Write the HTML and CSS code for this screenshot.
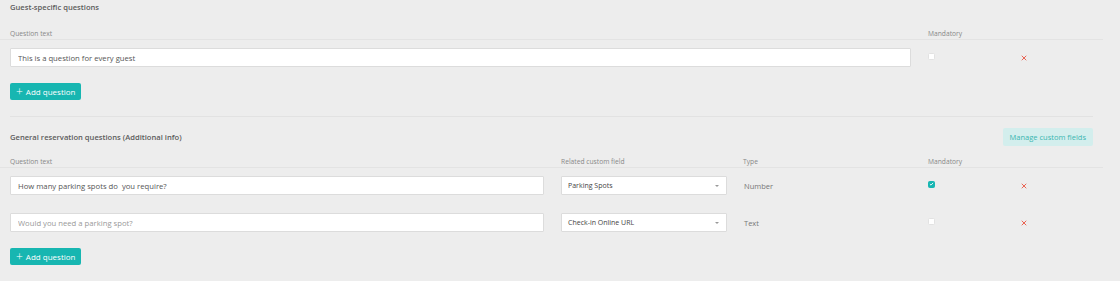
FILE: index.html
```html
<!DOCTYPE html>
<html lang="en">
<head>
  <meta charset="UTF-8">
  <meta name="viewport" content="width=device-width, initial-scale=1.0">
  <title>Questions</title>
  <link rel="stylesheet" href="styles.css">
</head>
<body>
  <div class="page">
    <section class="block">
      <div class="block-head">
        <h2 class="block-title">Guest-specific questions</h2>
      </div>
      <div class="grid guest-grid col-head">
        <span>Question text</span>
        <span>Mandatory</span>
        <span></span>
      </div>
      <div class="grid guest-grid q-row">
        <div><input class="text-input wide" type="text" value="This is a question for every guest"></div>
        <div><span class="check"></span></div>
        <div><svg class="remove" viewBox="0 0 8 8" width="6" height="6"><path d="M1 1 L7 7 M7 1 L1 7" stroke="#e8604f" stroke-width="1.3"/></svg></div>
      </div>
      <button class="add-btn"><span class="plus">+</span> Add question</button>
    </section>

    <section class="block block-second">
      <div class="block-head">
        <h2 class="block-title">General reservation questions (Additional info)</h2>
        <button class="manage-btn">Manage custom fields</button>
      </div>
      <div class="grid general-grid col-head">
        <span>Question text</span>
        <span>Related custom field</span>
        <span>Type</span>
        <span>Mandatory</span>
        <span></span>
      </div>
      <div class="grid general-grid q-row">
        <div><input class="text-input" type="text" value="How many parking spots do  you require?"></div>
        <div class="select"><span>Parking Spots</span><span class="caret"></span></div>
        <div class="type">Number</div>
        <div><span class="check checked"><svg viewBox="0 0 8 8" width="6" height="6"><path d="M1.5 4.2 L3.2 5.8 L6.5 2.2" fill="none" stroke="#fff" stroke-width="1.4"/></svg></span></div>
        <div><svg class="remove" viewBox="0 0 8 8" width="6" height="6"><path d="M1 1 L7 7 M7 1 L1 7" stroke="#e8604f" stroke-width="1.3"/></svg></div>
      </div>
      <div class="grid general-grid q-row row-gap">
        <div><input class="text-input" type="text" placeholder="Would you need a parking spot?"></div>
        <div class="select"><span>Check-in Online URL</span><span class="caret"></span></div>
        <div class="type">Text</div>
        <div><span class="check"></span></div>
        <div><svg class="remove" viewBox="0 0 8 8" width="6" height="6"><path d="M1 1 L7 7 M7 1 L1 7" stroke="#e8604f" stroke-width="1.3"/></svg></div>
      </div>
      <button class="add-btn"><span class="plus">+</span> Add question</button>
    </section>
  </div>
</body>
</html>
```

FILE: styles.css
```css
body {
  margin: 0;
  background-color: #ededed;
  font-family: 'Open Sans', 'Liberation Sans', sans-serif;
  color: #555;
}
.page {
  padding: 0 27px 0 10px;
}
.block-head {
  display: flex;
  align-items: center;
  justify-content: space-between;
}
.block-title {
  margin: 0;
  font-size: 7.6px;
  font-weight: 600;
  line-height: 14px;
  color: #5c5c5c;
}
.block-second {
  margin-top: 16px;
  padding-top: 11px;
  border-top: 1px solid #e2e2e2;
}
.block-second .block-head {
  height: 18px;
}
.grid {
  display: grid;
  align-items: center;
}
.guest-grid {
  grid-template-columns: 918px 93px auto;
}
.general-grid {
  grid-template-columns: 551px 182px 185px 93px auto;
}
.col-head {
  margin: 15px -10px 0 -10px;
  padding: 0 0 0 10px;
  width: 1093px;
  line-height: 10px;
  font-size: 6.7px;
  color: #888;
  border-bottom: 1px solid #e3e3e3;
}
.block-second .col-head {
  margin-top: 11px;
}
.q-row {
  margin-top: 8px;
}
.row-gap {
  margin-top: 18px;
}
.text-input {
  box-sizing: border-box;
  width: 534px;
  height: 19px;
  padding: 0 7px;
  border: 1px solid #dcdcdc;
  border-radius: 1px;
  background: #fff;
  font-family: inherit;
  font-size: 7.7px;
  color: #555;
  outline: none;
  display: block;
}
.text-input.wide {
  width: 901px;
}
.text-input::placeholder {
  color: #999;
}
.select {
  box-sizing: border-box;
  width: 166px;
  height: 19px;
  padding: 0 6px;
  border: 1px solid #dcdcdc;
  border-radius: 1px;
  background: #fff;
  display: flex;
  align-items: center;
  justify-content: space-between;
  font-size: 7px;
  color: #444;
}
.caret {
  width: 0;
  height: 0;
  border-left: 2.5px solid transparent;
  border-right: 2.5px solid transparent;
  border-top: 2.5px solid #999;
  margin-right: 1px;
}
.type {
  font-size: 7.5px;
  color: #777;
  padding-left: 1px;
}
.check {
  display: block;
  box-sizing: border-box;
  width: 7px;
  height: 7px;
  margin-top: -3px;
  border: 1px solid #e2e2e2;
  border-radius: 1.5px;
  background: #fff;
}
.check.checked {
  background: #17b6b2;
  border-color: #17b6b2;
  display: flex;
  align-items: center;
  justify-content: center;
}
.remove {
  display: block;
  margin-top: 1px;
}
.add-btn {
  display: flex;
  align-items: center;
  gap: 3px;
  margin-top: 16px;
  height: 17px;
  padding: 0 6px 0 6px;
  border: none;
  border-radius: 2px;
  background-color: #17b6b1;
  color: #fff;
  font-family: inherit;
  font-size: 8px;
}
.plus {
  font-size: 12px;
  font-weight: 300;
  line-height: 10px;
}
.manage-btn {
  height: 18px;
  padding: 0 7px;
  border: none;
  border-radius: 2px;
  background-color: #d3eeed;
  color: #3bb6b1;
  font-family: inherit;
  font-size: 7.5px;
}
```
